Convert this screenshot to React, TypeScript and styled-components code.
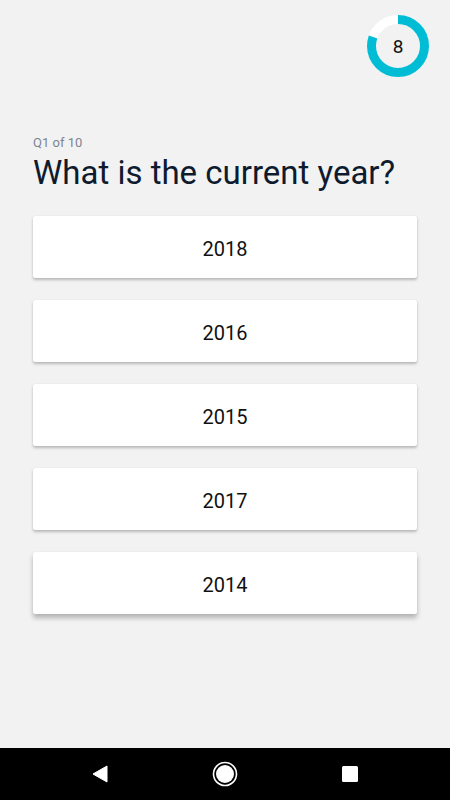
import React from 'react';
import styled, { createGlobalStyle } from 'styled-components';

const ANSWERS = ['2018', '2016', '2015', '2017', '2014'];
const TIME_LEFT = 8;
const TIME_TOTAL = 10;

const GlobalStyle = createGlobalStyle`
  html, body {
    margin: 0;
    padding: 0;
    background: #f2f2f2;
  }
  * {
    box-sizing: border-box;
  }
`;

const Screen = styled('div')`
  width: 450px;
  height: 800px;
  display: flex;
  flex-direction: column;
  background: #f2f2f2;
  font-family: Roboto, 'Noto Sans', Arial, sans-serif;
`;

const Content = styled('div')`
  flex: 1;
  display: flex;
  flex-direction: column;
  padding: 15px 33px 0 33px;
`;

const TopBar = styled('div')`
  display: flex;
  justify-content: flex-end;
  margin-right: -12px;
`;

const Timer = styled('div')`
  position: relative;
  width: 62px;
  height: 62px;
  display: flex;
  align-items: center;
  justify-content: center;
`;

const TimerRing = styled('svg')`
  position: absolute;
  inset: 0;
`;

const TimerValue = styled('span')`
  position: relative;
  font-size: 19px;
  color: #111;
`;

const Counter = styled('div')`
  margin-top: 58px;
  font-size: 13px;
  color: #7d8591;
`;

const Question = styled('h1')`
  margin: 3px 0 0 0;
  font-size: 33px;
  font-weight: 400;
  color: #0e1b2e;
  line-height: 40px;
`;

const Answers = styled('div')`
  display: flex;
  flex-direction: column;
  gap: 22px;
  margin-top: 23px;
`;

const Answer = styled('button')<{ $raised?: boolean }>`
  height: 62px;
  width: 100%;
  padding: 3px 0 0 0;
  border: none;
  border-radius: 2px;
  background: #fff;
  font-family: inherit;
  font-size: 20px;
  color: #111;
  box-shadow: ${(p) =>
    p.$raised
      ? '0 4px 5px rgba(0, 0, 0, 0.26), 0 0 1px rgba(0, 0, 0, 0.12)'
      : '0 2px 3px rgba(0, 0, 0, 0.24), 0 0 1px rgba(0, 0, 0, 0.12)'};
  cursor: pointer;
`;

const NavBar = styled('div')`
  height: 52px;
  background: #000;
  display: flex;
  align-items: center;
  justify-content: space-around;
  padding: 0 38px;
`;

const NavButton = styled('div')`
  width: 30px;
  height: 30px;
  display: flex;
  align-items: center;
  justify-content: center;
`;

function Ring({ value, total }: { value: number; total: number }) {
  const r = 26.5;
  const c = 2 * Math.PI * r;
  const done = (value / total) * c;
  return (
    <TimerRing width="62" height="62" viewBox="0 0 62 62">
      <circle cx="31" cy="31" r={r} fill="none" stroke="#fff" strokeWidth="9" />
      <circle
        cx="31"
        cy="31"
        r={r}
        fill="none"
        stroke="#00bcd4"
        strokeWidth="9"
        strokeDasharray={`${done} ${c}`}
        transform="rotate(-90 31 31)"
      />
    </TimerRing>
  );
}

export default function App() {
  return (
    <>
      <GlobalStyle />
      <Screen>
        <Content>
          <TopBar>
            <Timer>
              <Ring value={TIME_LEFT} total={TIME_TOTAL} />
              <TimerValue>{TIME_LEFT}</TimerValue>
            </Timer>
          </TopBar>
          <Counter>Q1 of 10</Counter>
          <Question>What is the current year?</Question>
          <Answers>
            {ANSWERS.map((a, i) => (
              <Answer key={a} $raised={i === ANSWERS.length - 1}>
                {a}
              </Answer>
            ))}
          </Answers>
        </Content>
        <NavBar>
          <NavButton>
            <svg width="18" height="18" viewBox="0 0 18 18">
              <path d="M16 1 L16 17 L2 9 Z" fill="#fff" strokeLinejoin="round" stroke="#fff" strokeWidth="1" />
            </svg>
          </NavButton>
          <NavButton>
            <svg width="26" height="26" viewBox="0 0 26 26">
              <circle cx="13" cy="13" r="11.5" fill="none" stroke="#fff" strokeWidth="1.6" />
              <circle cx="13" cy="13" r="9" fill="#fff" />
            </svg>
          </NavButton>
          <NavButton>
            <svg width="18" height="18" viewBox="0 0 18 18">
              <rect x="1" y="1" width="16" height="16" rx="1.5" fill="#fff" />
            </svg>
          </NavButton>
        </NavBar>
      </Screen>
    </>
  );
}
